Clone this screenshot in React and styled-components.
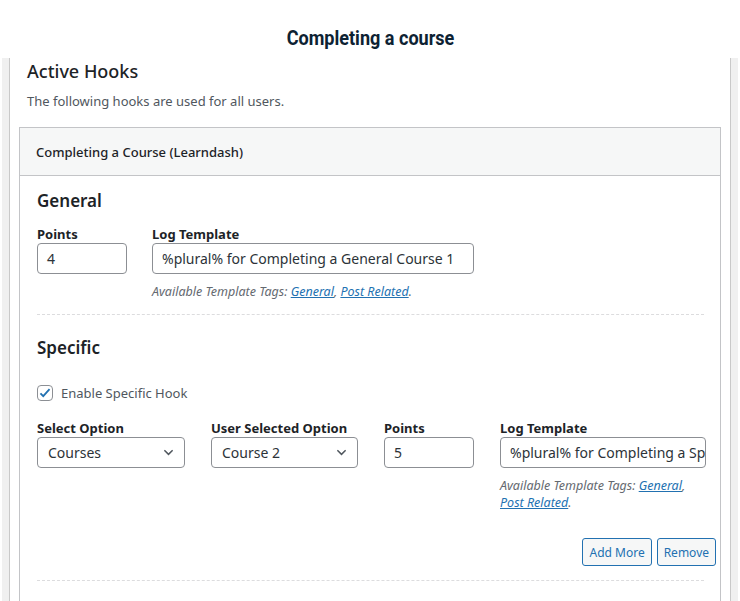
import React from 'react';
import styled, { createGlobalStyle } from 'styled-components';

const GlobalStyle = createGlobalStyle`
  html, body {
    margin: 0;
    padding: 0;
    background: #fff;
  }
  body {
    font-family: 'Noto Sans', 'Open Sans', sans-serif;
    color: #1d2327;
    overflow: hidden;
  }
`;

const Field = ({ label, children, help }) => (
  <FieldBox>
    <Label>{label}</Label>
    {children}
    {help && <Help>{help}</Help>}
  </FieldBox>
);

const TemplateTags = () => (
  <>
    Available Template Tags: <TagLink>General</TagLink>, <TagLink>Post Related</TagLink>.
  </>
);

const Select = ({ value }) => (
  <SelectBox>
    <span>{value}</span>
    <svg width="15" height="15" viewBox="0 0 20 20">
      <path d="M4.5 7l5.5 5.5L15.5 7" fill="none" stroke="#50575e" strokeWidth="2" />
    </svg>
  </SelectBox>
);

const App = () => {
  return (
    <>
      <GlobalStyle />
      <Header>
        <Title>Completing a course</Title>
      </Header>

      <Frame>
        <Panel>
          <PanelTitle>Active Hooks</PanelTitle>
          <Description>The following hooks are used for all users.</Description>

          <Card>
            <CardHeader>Completing a Course (Learndash)</CardHeader>
            <CardBody>
              <SectionTitle>General</SectionTitle>
              <Row cols="90px 322px" gap={25}>
                <Field label="Points">
                  <Input>4</Input>
                </Field>
                <Field label="Log Template" help={<TemplateTags />}>
                  <Input>%plural% for Completing a General Course 1</Input>
                </Field>
              </Row>

              <Divider space={14} />

              <SectionTitle>Specific</SectionTitle>
              <CheckRow>
                <Checkbox>
                  <svg width="14" height="14" viewBox="0 0 20 20">
                    <path d="M3.5 10.5l4 4 9-10" fill="none" stroke="#2271b1" strokeWidth="2.6" />
                  </svg>
                </Checkbox>
                Enable Specific Hook
              </CheckRow>

              <Row cols="148px 147px 90px 206px" gap={26}>
                <Field label="Select Option">
                  <Select value="Courses" />
                </Field>
                <Field label="User Selected Option">
                  <Select value="Course 2" />
                </Field>
                <Field label="Points">
                  <Input>5</Input>
                </Field>
                <Field label="Log Template" help={<TemplateTags />}>
                  <Input>%plural% for Completing a Specific Course 2</Input>
                </Field>
              </Row>

              <Actions>
                <Button>Add More</Button>
                <Button>Remove</Button>
              </Actions>

              <Divider space={14} />
            </CardBody>
          </Card>
        </Panel>
      </Frame>
    </>
  );
};

const Header = styled.div`
  height: 58px;
  padding-top: 25px;
  box-sizing: border-box;
  text-align: center;
`;

const Title = styled.h1`
  display: inline-block;
  margin: 0;
  font-family: Roboto, 'Liberation Sans', sans-serif;
  font-size: 21px;
  line-height: 26px;
  font-weight: 700;
  color: #0d2233;
  transform: scaleX(0.86);
`;

const Frame = styled.div`
  margin: 0 2px;
  padding: 0 7px;
  background: #f0f0f0;
`;

const Panel = styled.div`
  background: #fff;
  border-left: 1px solid #c9c9c9;
  border-right: 1px solid #c9c9c9;
  padding: 0 9px 0 17px;
`;

const PanelTitle = styled.h2`
  margin: 0;
  font-size: 18px;
  line-height: 26px;
  font-weight: 500;
  color: #1d2327;
`;

const Description = styled.p`
  margin: 7px 0 0;
  font-size: 13px;
  line-height: 20px;
  color: #50575e;
`;

const Card = styled.div`
  margin-top: 16px;
  margin-left: -8px;
  width: 702px;
  box-sizing: border-box;
  border: 1px solid #c3c4c7;
  border-bottom: none;
  background: #fff;
`;

const CardHeader = styled.div`
  height: 47px;
  padding: 0 16px;
  display: flex;
  align-items: center;
  background: #f6f7f7;
  border-bottom: 1px solid #c3c4c7;
  font-size: 13px;
  font-weight: 500;
  color: #1d2327;
`;

const CardBody = styled.div`
  padding: 12px 16px 60px 17px;
`;

const SectionTitle = styled.h3`
  margin: 0 0 12px;
  font-size: 17px;
  line-height: 26px;
  font-weight: 600;
  color: #1d2327;
`;

const Row = styled.div`
  display: grid;
  grid-template-columns: ${p => p.cols};
  column-gap: ${p => p.gap}px;
  align-items: start;
`;

const FieldBox = styled.div`
  display: flex;
  flex-direction: column;
  min-width: 0;
`;

const Label = styled.div`
  font-size: 13px;
  line-height: 16px;
  font-weight: 700;
  color: #1d2327;
  margin-bottom: 1px;
`;

const Input = styled.div`
  height: 31px;
  box-sizing: border-box;
  border: 1px solid #8c8f94;
  border-radius: 4px;
  padding: 0 0 0 9px;
  display: flex;
  align-items: center;
  font-size: 14px;
  color: #2c3338;
  white-space: nowrap;
  overflow: hidden;
  background: #fff;
`;

const SelectBox = styled(Input)`
  justify-content: space-between;
  padding: 0 8px 0 10px;
`;

const Help = styled.div`
  margin-top: 9px;
  font-size: 12.5px;
  line-height: 17px;
  font-style: italic;
  color: #646970;
`;

const TagLink = styled.a`
  color: #2271b1;
  text-decoration: underline;
  cursor: pointer;
`;

const Divider = styled.div`
  margin-top: ${p => p.space}px;
  border-top: 1px dashed #dcdcde;
  padding-top: 20px;
`;

const CheckRow = styled.label`
  display: flex;
  align-items: center;
  gap: 8px;
  margin-top: 23px;
  margin-bottom: 18px;
  font-size: 13px;
  color: #50575e;
`;

const Checkbox = styled.span`
  width: 16px;
  height: 16px;
  box-sizing: border-box;
  border: 1px solid #8c8f94;
  border-radius: 4px;
  display: flex;
  align-items: center;
  justify-content: center;
`;

const Actions = styled.div`
  display: flex;
  justify-content: flex-end;
  gap: 5px;
  margin-right: -12px;
  margin-top: 27px;
`;

const Button = styled.button`
  height: 28px;
  padding: 0 6px;
  border: 1px solid #2271b1;
  border-radius: 3px;
  background: #f6f7f7;
  color: #2271b1;
  font-family: inherit;
  font-size: 12px;
  cursor: pointer;
`;

export default App;
